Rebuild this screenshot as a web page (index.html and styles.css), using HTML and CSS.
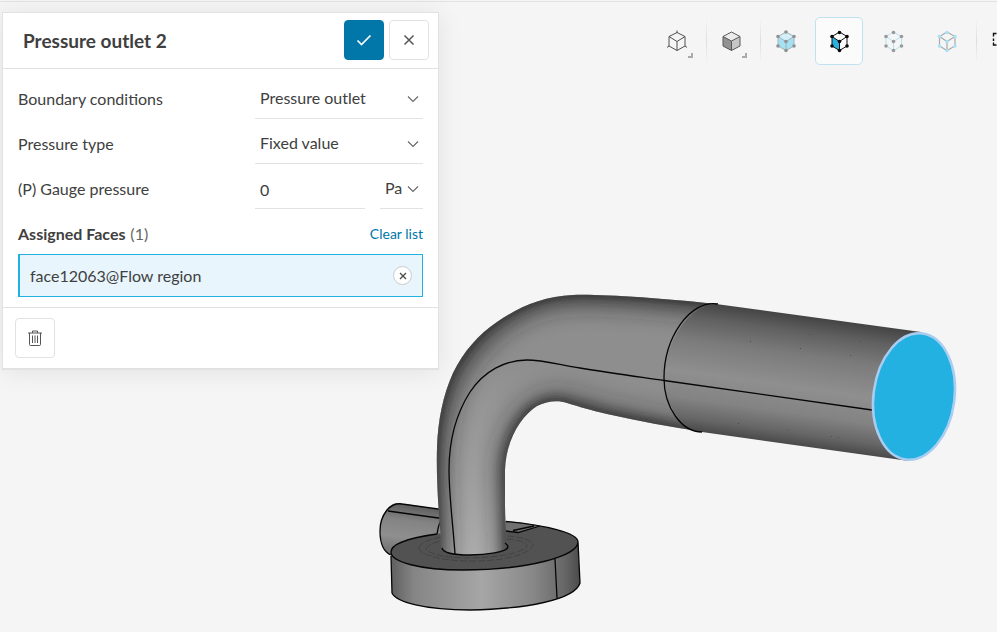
FILE: index.html
```
<!DOCTYPE html>
<html lang="en">
<head>
<meta charset="utf-8">
<meta name="viewport" content="width=device-width, initial-scale=1">
<title>Pressure outlet 2</title>
<link rel="stylesheet" href="styles.css">
</head>
<body>
<main class="workspace">
  <svg class="scene" viewBox="0 0 997 632" preserveAspectRatio="xMinYMin slice" role="img" aria-label="Pipe model">
    <defs>
      <linearGradient id="barrel" gradientUnits="userSpaceOnUse" x1="800" y1="316" x2="782" y2="444">
        <stop offset="0" stop-color="#454545"/><stop offset=".12" stop-color="#606060"/><stop offset=".3" stop-color="#7b7b7b"/><stop offset=".55" stop-color="#8f8f8f"/><stop offset=".75" stop-color="#838383"/><stop offset=".9" stop-color="#666"/><stop offset="1" stop-color="#484848"/>
      </linearGradient>
      <linearGradient id="bend" gradientUnits="userSpaceOnUse" x1="470" y1="552" x2="520" y2="360">
        <stop offset="0" stop-color="#acacac"/><stop offset=".35" stop-color="#a0a0a0"/><stop offset="1" stop-color="#8e8e8e"/>
      </linearGradient>
      <linearGradient id="rim" x1="0" x2="1" y1="0" y2="0">
        <stop offset="0" stop-color="#5f5f5f"/><stop offset=".12" stop-color="#858585"/><stop offset=".48" stop-color="#a6a6a6"/><stop offset=".75" stop-color="#888"/><stop offset=".92" stop-color="#666"/><stop offset="1" stop-color="#4b4b4b"/>
      </linearGradient>
      <linearGradient id="inlet" gradientUnits="userSpaceOnUse" x1="414" y1="504" x2="408" y2="552">
        <stop offset="0" stop-color="#5a5a5a"/><stop offset=".35" stop-color="#838383"/><stop offset=".7" stop-color="#8f8f8f"/><stop offset="1" stop-color="#757575"/>
      </linearGradient>
      <clipPath id="bend-shape">
        <path d="M442 549C439 520 436 480 437 447C438 420 443 395 453 373C464 351 478 335 497 322C517 308 543 296 573 295C600 294 660 298 716 304C690 305 665 340 665 378C665 408 684 431 704 432C670 427 638 421 607 414C590 410 580 407 567 403C558 400 547 401 537 406C521 416 506 440 505 470L505 500C505 520 506 535 508 547C500 554 480 555 470 555C455 555 445 553 442 549Z"/>
      </clipPath>
      <filter id="wide" x="-20%" y="-20%" width="140%" height="140%"><feGaussianBlur stdDeviation="12"/></filter>
      <filter id="narrow" x="-20%" y="-20%" width="140%" height="140%"><feGaussianBlur stdDeviation="5"/></filter>
    </defs>

    <path fill="url(#inlet)" d="M398 503L445 510L445 540L400 548L390 555C384 551 380 541 380 531C380 516 388 503 398 503Z"/>
    <path class="edge" d="M445 510L402 504C390 502 380 515 380 531C380 543 384 552 391 555M388 511L442 518.5M441 520Q438 526 437 535"/>

    <path fill="url(#rim)" d="M391 552L392 593C396 602 425 610 470 610C525 609 575 600 580 583L578 542Z"/>
    <path fill="#525252" d="M391 552C391 545 402 539 437 534L506 521C548 525 578 534 578 542C578 556 528 570 463 570C420 570 391 562 391 552Z"/>
    <path fill="#707070" d="M505 521L540 526L519 532L505 530Z"/>
    <path class="edge" d="M437 534C402 539 391 545 391 552C391 562 420 570 463 570C528 570 578 556 578 542C578 533 545 525 506 521.5M391 556L392 593C396 602 425 610 470 610C525 609 575 600 580 583L578 542M555 559L557 598M505 531L518 532.5L540 526M513 530.5L534 526"/>
    <path class="groove" d="M419 548C420 543 430 539 442 537M507 536C523 537 533 541 533 545C530 555 500 562 466 561C437 560 420 554 419 548M426 549C428 545 434 542 442 541M507 539C520 540 527 543 527 546C524 553 496 558 468 558C446 558 429 554 426 549"/>

    <path fill="url(#barrel)" d="M716 304L921 332L940 400L909 461L702 432C681 432 662 408 662 378C662 340 688 302 716 304Z"/>

    <g clip-path="url(#bend-shape)">
      <path fill="url(#bend)" d="M420 280H730V570H420Z"/>
      <path class="shade" filter="url(#wide)" stroke-width="24" opacity=".65" d="M435 570C440 540 432 480 436 445C438 418 443 394 453 373C464 351 478 335 497 320C517 306 543 293 573 293C600 292 660 296 730 304"/>
      <path class="shade" filter="url(#narrow)" stroke-width="7" opacity=".75" d="M437 560C437 520 434 480 436 447C437 420 442 395 452 373C463 351 477 335 496 321C516 307 543 295 573 294C600 293 660 297 730 304"/>
      <path class="shade" filter="url(#wide)" stroke-width="18" opacity=".6" d="M509 570L506 470C507 440 522 416 538 407C548 402 558 401 567 404L607 415C640 422 670 428 730 438"/>
      <path class="shade" filter="url(#narrow)" stroke-width="8" opacity=".8" d="M508 570L506 470C507 440 522 416 538 407C548 402 558 401 567 404L607 415C640 422 670 428 730 438"/>
    </g>
    <path class="edge" d="M718 304C690 299 664 338 664 378C664 408 682 432 702 432M442 548C443 553 455 555 470 555C486 555 507 552 508 547Q508 545 505 543"/>
    <path class="edge" d="M455 554C453 525 449 495 449 470C449 442 456 414 470 392C484 371 505 360 527 360C543 360 560 365 580 368C610 373 640 377 664 380.5L872 410"/>
    <path fill="#4c4c4c" d="M750 341h1v1h-1zM800 348h1v1h-1zM809 334h1v1h-1zM850 355h1v1h-1zM859 341h1v1h-1zM738 423h1v1h-1zM788 430h1v1h-1zM831 436h1v1h-1zM838 437h1v1h-1z"/>
    <ellipse cx="914" cy="396.500" rx="40.500" ry="63.500" transform="rotate(7.500 914 396.500)" fill="#22b1e1" stroke="#a9cdf1" stroke-width="2.500"/>
  </svg>

  <form class="panel">
    <header class="panel-header">
      <h1 class="panel-title">Pressure outlet 2</h1>
      <button class="button button-primary" type="button" aria-label="Apply">
        <svg class="glyph" viewBox="0 0 16 16"><path d="M1.500 8.500L5.500 12.500L14.500 3.500" stroke-width="1.700"/></svg>
      </button>
      <button class="button" type="button" aria-label="Close">
        <svg class="glyph" viewBox="0 0 16 16"><path d="M3.500 3.500L12.500 12.500M12.500 3.500L3.500 12.500" stroke-width="1.500"/></svg>
      </button>
    </header>
    <div class="fields">
      <div class="field">
        <label for="condition">Boundary conditions</label>
        <div class="picker">
          <select id="condition"><option>Pressure outlet</option></select>
          <svg class="chevron" viewBox="0 0 12 12"><path d="M1 3.500L6 8.500L11 3.500"/></svg>
        </div>
      </div>
      <div class="field">
        <label for="type">Pressure type</label>
        <div class="picker">
          <select id="type"><option>Fixed value</option></select>
          <svg class="chevron" viewBox="0 0 12 12"><path d="M1 3.500L6 8.500L11 3.500"/></svg>
        </div>
      </div>
      <div class="field">
        <label for="gauge">(P) Gauge pressure</label>
        <div class="measure">
          <input id="gauge" type="text" value="0">
          <div class="picker">
            <select aria-label="Unit"><option>Pa</option></select>
            <svg class="chevron" viewBox="0 0 12 12"><path d="M1 3.500L6 8.500L11 3.500"/></svg>
          </div>
        </div>
      </div>
      <div class="assigned">
        <h2 class="assigned-title">Assigned Faces <span class="count">(1)</span></h2>
        <a class="clear" href="#">Clear list</a>
      </div>
      <div class="face">
        <span>face12063@Flow region</span>
        <button class="remove" type="button" aria-label="Remove face">
          <svg viewBox="0 0 8 8"><path d="M1 1L7 7M7 1L1 7"/></svg>
        </button>
      </div>
    </div>
    <footer class="panel-footer">
      <button class="button" type="button" aria-label="Delete">
        <svg class="glyph" viewBox="0 0 16 16"><path d="M1 3H15M5.500 3V1H10.500V3M2.500 3V14.500Q2.500 15.500 3.500 15.500H12.500Q13.500 15.500 13.500 14.500V3M5.500 5.500V13M8 5.500V13M10.500 5.500V13"/></svg>
      </button>
    </footer>
  </form>

  <nav class="toolbar" aria-label="View">
    <button class="tool divided" type="button" aria-label="Wireframe">
      <svg class="cube" viewBox="0 0 24 24"><path d="M12 3.500L20 7.500V17L12 21.500L4 17V7.500ZM4 7.500L12 12.500L20 7.500M12 12.500V21.500M12 1.500V4M4 17L2 18.500M20 17L22 18.500" fill="none" stroke="#505050"/></svg>
      <svg class="corner" viewBox="0 0 5 5"><path d="M4 0V4H0"/></svg>
    </button>
    <button class="tool divided" type="button" aria-label="Solid">
      <svg class="cube" viewBox="0 0 24 24"><path d="M12.500 3L21 7.500L12.500 12L4 7.500Z" fill="#ececec"/><path d="M4 7.500L12.500 12V21.500L4 17Z" fill="#929292"/><path d="M21 7.500L12.500 12V21.500L21 17Z" fill="#c6c6c6"/><path d="M12.500 3L21 7.500V17L12.500 21.500L4 17V7.500ZM4 7.500L12.500 12L21 7.500M12.500 12V21.500" fill="none" stroke="#585858"/></svg>
      <svg class="corner" viewBox="0 0 5 5"><path d="M4 0V4H0"/></svg>
    </button>
    <button class="tool" type="button" aria-label="Select volumes">
      <svg class="cube" viewBox="0 0 24 24"><path d="M13 3L21 7.500V17L13 21.500L5 17V7.500Z" fill="#a5e0f3"/><path d="M13 3L21 7.500L13 12.500L5 7.500Z" fill="#d5eff8"/><path d="M13 3L21 7.500V17L13 21.500L5 17V7.500ZM5 7.500L13 12.500L21 7.500M13 12.500V21.500" fill="none" stroke="#a4b4ba"/><g fill="#929292"><circle cx="13" cy="3" r="1.800"/><circle cx="5" cy="7.500" r="1.800"/><circle cx="21" cy="7.500" r="1.800"/><circle cx="13" cy="12.500" r="1.800"/><circle cx="5" cy="17" r="1.800"/><circle cx="21" cy="17" r="1.800"/><circle cx="13" cy="21.500" r="1.800"/></g></svg>
    </button>
    <button class="tool active" type="button" aria-label="Select faces" aria-pressed="true">
      <svg class="cube" viewBox="0 0 24 24"><path d="M5 7.500L12.500 12.500V21.500L5 17Z" fill="#29b1e2"/><path d="M12.500 3L20 7.500V17L12.500 21.500L5 17V7.500ZM5 7.500L12.500 12.500L20 7.500M12.500 12.500V21.500" fill="none" stroke="#111"/><g fill="#080808"><circle cx="12.500" cy="3.500" r="1.800"/><circle cx="5" cy="7.500" r="1.800"/><circle cx="20" cy="7.500" r="1.800"/><circle cx="12.500" cy="12.500" r="1.800"/><circle cx="5" cy="17" r="1.800"/><circle cx="20" cy="17" r="1.800"/><circle cx="12.500" cy="21.500" r="1.800"/></g></svg>
    </button>
    <button class="tool" type="button" aria-label="Select vertices">
      <svg class="cube" viewBox="0 0 24 24"><path d="M12.500 3L20.500 7.500V17L12.500 21.500L5 17V7.500ZM5 7.500L12.500 12.500L20.500 7.500M12.500 12.500V21.500" fill="none" stroke="#b4e2f2"/><g fill="#999"><circle cx="12.500" cy="3.500" r="1.800"/><circle cx="5" cy="7.500" r="1.800"/><circle cx="20.500" cy="7.500" r="1.800"/><circle cx="12.500" cy="12.500" r="1.800"/><circle cx="5" cy="17" r="1.800"/><circle cx="20.500" cy="17" r="1.800"/><circle cx="12.500" cy="21.500" r="1.800"/></g></svg>
    </button>
    <button class="tool divided" type="button" aria-label="Select edges">
      <svg class="cube" viewBox="0 0 24 24"><path d="M12 3L20 7.500V17L12 21.500L4.500 17V7.500ZM4.500 7.500L12 12.500L20 7.500M12 12.500V21.500" fill="none" stroke="#a8a8a8" stroke-width="1.200"/><g fill="#a9e2f5"><circle cx="12" cy="3.500" r="1.800"/><circle cx="4.500" cy="7.500" r="1.800"/><circle cx="20" cy="7.500" r="1.800"/><circle cx="12" cy="12.500" r="1.800"/><circle cx="4.500" cy="17" r="1.800"/><circle cx="20" cy="17" r="1.800"/><circle cx="12" cy="21.500" r="1.800"/></g></svg>
    </button>
    <button class="tool" type="button" aria-label="Box selection">
      <svg class="cube" viewBox="0 0 24 24"><path d="M7.500 4.500H4.500V7.500M4.500 9.500V12M4.500 13.500V16H7.500M9.500 4.500H12M14 4.500H18V8M18 10V15.500" fill="none" stroke="#111" stroke-width="1.400"/></svg>
    </button>
  </nav>
</main>
</body>
</html>
```
FILE: styles.css
```
* {
  box-sizing: border-box;
}

body {
  margin: 0;
  font-family: Lato, "Liberation Sans", sans-serif;
  font-size: 16px;
  line-height: 20px;
  color: #404040;
  background: #f5f5f5;
}

.workspace {
  position: relative;
  display: flex;
  align-items: flex-start;
  min-height: 100vh;
  padding: 12px 0 0 2px;
  overflow: hidden;
}

.workspace::before {
  content: "";
  position: absolute;
  inset: 1px 0 auto;
  height: 1px;
  background: #e1e3e3;
}

.scene {
  position: absolute;
  inset: 0;
  width: 100%;
  height: 100%;
}

.edge {
  fill: none;
  stroke: #060606;
  stroke-width: 1.3;
}

.groove {
  fill: none;
  stroke: #3c3c3c;
  stroke-width: 0.7;
  stroke-dasharray: 7 2;
}

.shade {
  fill: none;
  stroke: #1c1c1c;
}

.panel {
  position: relative;
  flex: 0 0 437px;
  background: #fff;
  border: 1px solid #e2e2e2;
  border-bottom-width: 2px;
  box-shadow: 0 2px 24px rgba(0, 0, 0, 0.08);
}

.panel-header {
  display: flex;
  align-items: center;
  gap: 5px;
  padding: 7px 9px 8px 20px;
  border-bottom: 1px solid #e2e2e2;
}

.panel-title {
  flex: 1;
  margin: 0;
  padding-top: 2px;
  font-size: 19px;
  line-height: 24px;
  font-weight: 700;
}

.button {
  display: grid;
  place-items: center;
  width: 40px;
  height: 40px;
  padding: 0;
  color: #555;
  background: #fff;
  border: 1px solid #e2e2e2;
  border-radius: 4px;
}

.button-primary {
  color: #fff;
  background: #0076a9;
  border-color: #0076a9;
}

.glyph {
  width: 16px;
  height: 16px;
  fill: none;
  stroke: currentColor;
}

.fields {
  padding: 5px 15px 10px;
}

.field {
  display: grid;
  grid-template-columns: 1fr 168px;
  align-items: center;
  height: 45px;
}

.field label {
  padding-top: 5px;
}

.picker {
  display: grid;
  align-items: center;
  border-bottom: 1px solid #e2e2e2;
}

.picker select,
.chevron {
  grid-area: 1 / 1;
}

.picker select,
.measure input {
  width: 100%;
  height: 44px;
  padding: 4px 5px 0;
  font: inherit;
  color: inherit;
  background: none;
  border: 0;
  border-radius: 0;
  appearance: none;
  outline: none;
}

.measure input {
  height: 45px;
  padding-top: 6px;
  border-bottom: 1px solid #e2e2e2;
}

.measure {
  display: grid;
  grid-template-columns: 110px 43px;
  justify-content: space-between;
}

.chevron {
  justify-self: end;
  width: 12px;
  height: 12px;
  margin: 5px 4px 0 0;
  fill: none;
  stroke: #666;
  stroke-width: 1.1;
  pointer-events: none;
}

.assigned {
  display: flex;
  align-items: center;
  justify-content: space-between;
  height: 45px;
  padding-top: 5px;
}

.assigned-title {
  margin: 0;
  font-size: 16px;
  font-weight: 700;
}

.count {
  margin-left: 1px;
  font-weight: 400;
  color: #666;
}

.clear {
  font-size: 14px;
  color: #0076a9;
  text-decoration: none;
}

.face {
  display: flex;
  align-items: center;
  justify-content: space-between;
  height: 43px;
  padding: 0 10px;
  background: #e8f5fc;
  border: 1px solid #22b1e1;
  border-left-width: 2px;
}

.remove {
  display: grid;
  place-items: center;
  width: 19px;
  height: 19px;
  padding: 0;
  background: #fff;
  border: 1px solid #ccc;
  border-radius: 50%;
}

.remove svg {
  width: 8px;
  height: 8px;
  fill: none;
  stroke: #505050;
  stroke-width: 1.4;
}

.panel-footer {
  padding: 10px 12px;
  border-top: 1px solid #e2e2e2;
}

.toolbar {
  position: relative;
  flex: 1;
  display: flex;
  justify-content: flex-end;
  gap: 6px;
  margin: 5px -28px 0 0;
}

.tool {
  position: relative;
  display: grid;
  place-items: center;
  flex: 0 0 48px;
  height: 48px;
  padding: 0;
  background: none;
  border: 1px solid transparent;
  border-radius: 5px;
}

.tool.active {
  background: #fbfbfb;
  border-color: #bfe2f0;
}

.tool.divided::after {
  content: "";
  position: absolute;
  top: 0;
  right: -7px;
  width: 1px;
  height: 46px;
  background: linear-gradient(transparent, #dedede, transparent);
}

.cube {
  width: 24px;
  height: 24px;
}

.corner {
  position: absolute;
  right: 7px;
  bottom: 6px;
  width: 5px;
  height: 5px;
  fill: none;
  stroke: #aaa;
  stroke-width: 2;
}
```
